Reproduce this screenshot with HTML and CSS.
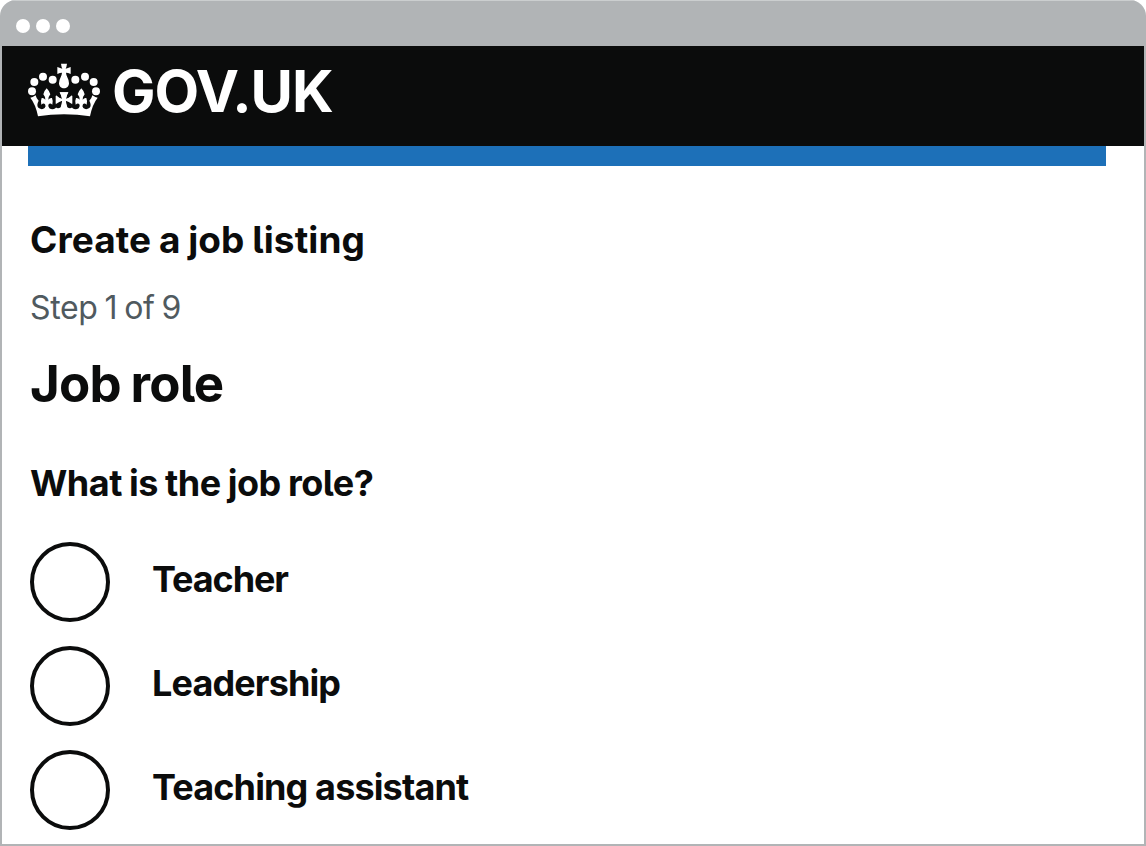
FILE: index.html
```html
<!DOCTYPE html>
<html lang="en">
<head>
<meta charset="utf-8">
<title>Create a job listing - GOV.UK</title>
<link rel="stylesheet" href="styles.css">
</head>
<body>
<div class="window">
  <div class="titlebar"><span class="dot"></span><span class="dot"></span><span class="dot"></span></div>
  <div class="viewport">
    <header class="header">
      <svg class="crown" viewBox="24 24 216 162" fill="#fff" aria-hidden="true">
        <defs>
          <g id="crown-half">
            <circle cx="36" cy="109" r="12"/><circle cx="43" cy="81" r="12"/><circle cx="69" cy="65" r="12"/><circle cx="98" cy="74" r="12"/>
            <path d="M31 128Q37 128 47 121Q48 128 56 137Q48 152 56 159Q66 166 74 159Q79 154 75 148Q71 143 64 149Q61 138 65 129Q72 128 76 134Q76 125 70 118Q72 108 80 100Q88 108 91 118Q85 125 85 134Q89 128 96 129Q100 138 97 149Q90 143 86 148Q82 155 88 160Q98 166 107 159Q112 153 107 146V122Q116 131 126 132Q124 121 119 112H132V178Q92 178 54 184Q47 148 31 128z"/>
            <path d="M107 145Q116 135 127 134Q125 149 122 157Q114 163 107 157z" fill="#0b0c0c"/>
          </g>
        </defs>
        <use href="#crown-half"/>
        <use href="#crown-half" transform="translate(264 0) scale(-1 1)"/>
        <path d="M108 121Q118 130 127 132Q125 121 119 112H145Q139 121 137 132Q146 130 156 121V147Q146 139 137 137Q138 150 143 162H121Q126 150 127 137Q118 139 108 147z"/>
        <path d="M123 26h18q-1 9-4 15q6-1 15-5v21q-8-4-14-4q1 9 4 14q5 9 5 18c0 9-7 15-15 15s-15-6-15-15q0-9 5-18q3-5 4-14q-6 0-14 4V36q9 4 15 5q-3-6-4-15z"/>
      </svg>
      <span class="brand">GOV.UK</span>
    </header>
    <main class="main">
      <div class="accent"></div>
      <h2 class="caption">Create a job listing</h2>
      <p class="step">Step 1 of 9</p>
      <h1 class="title">Job role</h1>
      <h3 class="question">What is the job role?</h3>
      <div class="options">
        <div class="option"><span class="radio"></span><span class="label label-short">Teacher</span></div>
        <div class="option"><span class="radio"></span><span class="label">Leadership</span></div>
        <div class="option"><span class="radio"></span><span class="label">Teaching assistant</span></div>
      </div>
    </main>
  </div>
</div>
</body>
</html>
```
FILE: styles.css
```css
* { box-sizing: border-box; }
body { margin: 0; background: #fff; color: #0b0c0c; font-family: Inter, "Liberation Sans", sans-serif; font-feature-settings: "cv05" 1; }
.window { width: 1146px; height: 846px; border-radius: 16px 16px 0 0; overflow: hidden; background: #b1b4b6; }
.titlebar { height: 46px; padding: 5px 0 0 16px; display: flex; align-items: center; gap: 6px; border-top: 1px solid #cbcecf; }
.dot { width: 14px; height: 14px; border-radius: 50%; background: #fff; }
.viewport { margin: 0 2px; height: 798px; background: #fff; overflow: hidden; }
.header { height: 100px; background: #0b0c0c; display: flex; align-items: flex-start; padding: 17px 0 0 26px; }
.crown { width: 72px; height: 54px; display: block; }
.brand { color: #fff; font-size: 58px; font-weight: 700; line-height: 56px; letter-spacing: -1.1px; margin-left: 12px; white-space: nowrap; }
.main { padding: 0 38px 0 26px; }
.accent { height: 20px; background: #1d70b8; }
h1, h2, h3, p { margin: 0 0 0 2px; white-space: nowrap; }
.caption { margin-top: 49px; font-size: 37px; line-height: 50px; letter-spacing: 0.1px; word-spacing: -1.2px; }
.step { margin-top: 23px; font-size: 32px; line-height: 40px; color: #505a5f; letter-spacing: -0.4px; word-spacing: -1.5px; font-weight: 400; }
.title { margin-top: 26px; font-size: 51px; line-height: 60px; letter-spacing: -0.8px; word-spacing: -1.5px; }
.question { margin-top: 44px; font-size: 36px; line-height: 50px; letter-spacing: -0.5px; word-spacing: -0.9px; }
.options { margin: 34px 0 0 2px; display: flex; flex-direction: column; gap: 24px; }
.option { display: flex; align-items: flex-start; gap: 42px; height: 80px; }
.radio { width: 80px; height: 80px; flex: none; border: 4px solid #0b0c0c; border-radius: 50%; }
.label { margin-top: 17px; font-size: 36px; line-height: 40px; font-weight: 700; letter-spacing: -0.87px; white-space: nowrap; }
.label-short { letter-spacing: -1.1px; }
```
